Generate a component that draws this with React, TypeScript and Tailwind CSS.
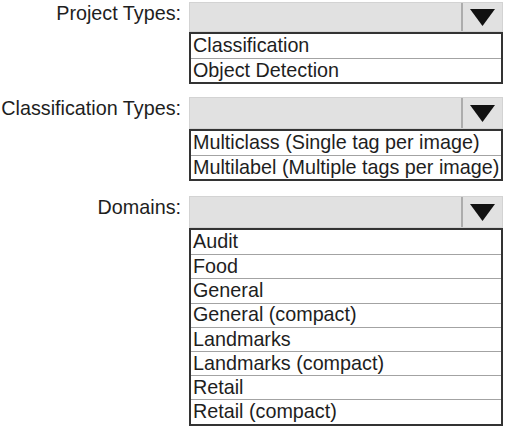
import React from 'react'

type Field = {
  label: string
  options: string[]
  boxH: string
  rowH: string
  mt: string
}

const fields: Field[] = [
  {
    label: 'Project Types:',
    options: ['Classification', 'Object Detection'],
    boxH: 'h-[30px]',
    rowH: 'h-[24px]',
    mt: 'mt-[2px]',
  },
  {
    label: 'Classification Types:',
    options: ['Multiclass (Single tag per image)', 'Multilabel (Multiple tags per image)'],
    boxH: 'h-[32px]',
    rowH: 'h-[24px]',
    mt: 'mt-[13px]',
  },
  {
    label: 'Domains:',
    options: [
      'Audit',
      'Food',
      'General',
      'General (compact)',
      'Landmarks',
      'Landmarks (compact)',
      'Retail',
      'Retail (compact)',
    ],
    boxH: 'h-[32px]',
    rowH: 'h-[24.2px]',
    mt: 'mt-[15px]',
  },
]

const Arrow = () => (
  <svg width="25" height="17" viewBox="0 0 25 17">
    <polygon points="0,0 25,0 12.5,17" fill="#111" />
  </svg>
)

const Dropdown = ({ field }: { field: Field }) => {
  return (
    <div className={`flex items-start ${field.mt}`}>
      <div className="w-[182px] shrink-0 pr-[1px] text-right leading-[22px]">{field.label}</div>
      <div className="ml-[7px] w-[314px]">
        <div className={`flex ${field.boxH} border border-[#d3d3d3] bg-[#e1e1e1]`}>
          <div className="flex-1" />
          <div className="flex w-[41px] items-center justify-center border-l-2 border-[#acacac] pt-[1px]">
            <Arrow />
          </div>
        </div>
        <div className="border-2 border-[#333333] bg-white">
          {field.options.map((opt, i) => (
            <div
              key={opt}
              className={`flex ${field.rowH} items-center px-[2px] whitespace-nowrap ${i > 0 ? 'border-t border-[#a3a3a3]' : ''}`}
            >
              {opt}
            </div>
          ))}
        </div>
      </div>
    </div>
  )
}

export default function App() {
  return (
    <div className="h-[428px] w-[505px] bg-white font-[family-name:'Liberation_Sans',Arial,sans-serif] text-[19.75px] text-[#1e1e1e]">
      {fields.map((f) => (
        <Dropdown key={f.label} field={f} />
      ))}
    </div>
  )
}
